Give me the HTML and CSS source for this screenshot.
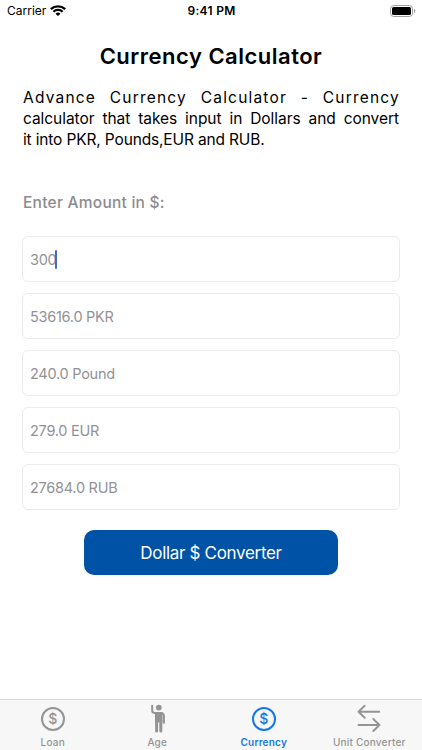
FILE: index.html
```
<!DOCTYPE html>
<html lang="en">
<head>
<meta charset="utf-8">
<title>Currency Calculator</title>
<link rel="stylesheet" href="styles.css">
</head>
<body>
<div class="app">
  <header class="status">
    <div class="carrier"><span>Carrier</span>
      <svg width="16" height="11" viewBox="0 0 15 11" preserveAspectRatio="none"><g fill="none" stroke="#000" stroke-width="2.2"><path d="M.8 4.1a9.6 9.6 0 0 1 13.4 0"/><path d="M3.2 6.7a6.1 6.1 0 0 1 8.6 0"/></g><path d="M7.5 11 5.2 8.7a3.3 3.3 0 0 1 4.6 0z"/></svg>
    </div>
    <span class="time">9:41 PM</span>
    <svg class="battery" width="26" height="12" viewBox="0 0 26 12"><rect x=".5" y=".5" width="22" height="11" rx="3.2" fill="#fff" stroke="#a0a0a0"/><rect x="2" y="2" width="19" height="8" rx="1.6"/><path d="M24 4v4q1.3-.6 1.3-2T24 4z" fill="#999"/></svg>
  </header>
  <main>
    <h1>Currency Calculator</h1>
    <p class="intro"><span class="line first">Advance Currency Calculator - Currency</span><span class="line second">calculator that takes input in Dollars and convert</span><span class="line third">it into PKR, Pounds,EUR and RUB.</span></p>
    <div class="label">Enter Amount in $:</div>
    <div class="fields">
      <div class="field"><span>300</span><i class="caret"></i></div>
      <div class="field">53616.0 PKR</div>
      <div class="field">240.0 Pound</div>
      <div class="field">279.0 EUR</div>
      <div class="field">27684.0 RUB</div>
    </div>
    <button class="convert"><span>Dollar $ Converter</span></button>
  </main>
  <nav class="tabs">
    <div class="tab"><div class="coin">$</div><span>Loan</span></div>
    <div class="tab age"><svg width="28" height="30" viewBox="0 0 28 30" fill="none" stroke="currentColor"><circle cx="15.8" cy="3.6" r="2.9" fill="currentColor" stroke="none"/><path d="M9.2 1.8v4.8q0 2.2 2.3 2.4h6.4q3 .2 3 3.2v6.6" stroke-width="2.1" stroke-linecap="round" stroke-linejoin="round"/><path d="M12 8.4h7.5v10H12z" fill="currentColor" stroke="none"/><path d="M13.6 17v10M17.8 17v10" stroke-width="3" stroke-linecap="round"/></svg><span>Age</span></div>
    <div class="tab active"><div class="coin">$</div><span>Currency</span></div>
    <div class="tab"><svg width="28" height="30" viewBox="0 0 28 30" fill="none" stroke="currentColor" stroke-width="1.9" stroke-linecap="round" stroke-linejoin="round"><path d="M24.3 7.8H3.5M9.7 1.8l-6.2 6 6.2 6M3.5 21h21M18.3 15l6.2 6-6.2 6"/></svg><span>Unit Converter</span></div>
  </nav>
</div>
</body>
</html>
```
FILE: styles.css
```
* { box-sizing: border-box; }
body { margin: 0; background: #fff; color: #000; font-family: Inter, "Liberation Sans", sans-serif; }
.app { width: 422px; height: 750px; display: flex; flex-direction: column; overflow: hidden; }
.status { height: 22px; padding: 0 6px 0 7px; display: grid; grid-template-columns: 1fr auto 1fr; align-items: center; font-size: 12px; line-height: 22px; }
.carrier { display: flex; align-items: center; gap: 4px; }
.carrier svg { margin-bottom: 1px; }
.time { font-weight: 600; letter-spacing: .3px; }
.battery { justify-self: end; }
main { flex: 1; display: flex; flex-direction: column; padding: 0 22px; }
h1 { margin: 18px 0 0; height: 32px; line-height: 32px; text-align: center; font-size: 22px; font-weight: 600; letter-spacing: .5px; white-space: nowrap; }
.intro { margin: 15px 1px 0; font-size: 15.5px; line-height: 21px; }
.line { display: block; height: 21px; white-space: nowrap; text-align: justify; text-align-last: justify; }
.first { letter-spacing: 1.2px; margin-right: -1px; }
.second { letter-spacing: -.05px; }
.third { letter-spacing: -.15px; text-align-last: left; }
.label { margin: 42px 0 0 1px; height: 22px; line-height: 22px; font-size: 15.5px; font-weight: 500; letter-spacing: .25px; color: #8c8c90; }
.fields { display: flex; flex-direction: column; gap: 11px; margin-top: 22px; }
.field { height: 46px; border: 1px solid #ebebeb; border-radius: 6px; padding: 0 7px; display: flex; align-items: center; font-size: 14.5px; letter-spacing: -.26px; color: #929296; }
.caret { width: 2px; height: 19px; margin-left: -1px; background: #4667ce; border-radius: 1px; }
.convert { width: 254px; height: 45px; margin: 20px auto 0; padding: 0; border: 0; border-radius: 10px; background: #0052a7; color: #fff; font: 400 17px Inter, sans-serif; letter-spacing: -.32px; }
.tabs { height: 51px; background: #f7f7f7; border-top: 1px solid #dadada; display: grid; grid-template-columns: repeat(4, 1fr); color: #949494; }
.tab { display: flex; flex-direction: column; align-items: center; justify-content: space-between; padding: 4px 0 1px; font-size: 10px; line-height: 14px; font-weight: 500; letter-spacing: .2px; white-space: nowrap; }
.age { padding-right: 2px; }
.coin { width: 24px; height: 24px; margin-top: 3px; border: 2px solid currentColor; border-radius: 50%; font-size: 14px; line-height: 20px; text-align: center; letter-spacing: 0; }
.active { color: #1677e6; }
.active span { font-weight: 600; }
```
